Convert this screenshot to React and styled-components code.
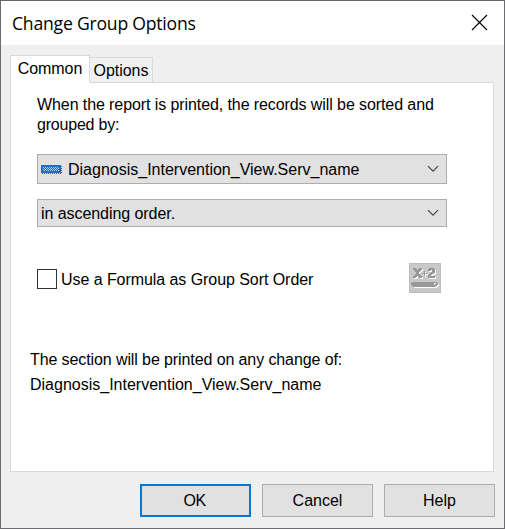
import React from "react";
import styled, { createGlobalStyle } from "styled-components";

const Global = createGlobalStyle`
  *, *::before, *::after { box-sizing: border-box; }
  body { margin: 0; overflow: hidden; }
`;

const Dialog = styled.main`
  width: 505px;
  height: 529px;
  display: flex;
  flex-direction: column;
  border: 1px solid #6d6d6f;
  border-top-color: #64646f;
  background: #efefef;
  color: #000;
  font: 16px/20px "Liberation Sans", Arial, sans-serif;
`;

const TitleBar = styled.header`
  height: 44px;
  flex: none;
  display: flex;
  align-items: center;
  justify-content: space-between;
  padding: 0 16px 0 11px;
  background: #fff;
`;

const Title = styled.h1`
  margin: 0;
  font: 400 17.6px/24px "Open Sans", "Noto Sans", sans-serif;
  letter-spacing: -0.22px;
  white-space: nowrap;
`;

const CloseButton = styled.button`
  width: 17px;
  height: 17px;
  margin-top: -1px;
  padding: 0;
  border: 0;
  background: none;
  svg { display: block; }
`;

const Tabs = styled.nav`
  height: 38px;
  flex: none;
  display: flex;
  align-items: flex-end;
  padding-left: 9px;
  margin-bottom: -1px;
  z-index: 1;
`;

const Tab = styled.button`
  width: ${(p) => (p.$active ? 80 : 63)}px;
  height: ${(p) => (p.$active ? 28 : 26)}px;
  padding: ${(p) => (p.$active ? "0 0 1px" : "1px 0 0")};
  border: 1px solid #d9d9d9;
  border-left-width: ${(p) => (p.$active ? 1 : 0)}px;
  border-bottom-color: ${(p) => (p.$active ? "#fff" : "#d9d9d9")};
  background: ${(p) => (p.$active ? "#fff" : "#f0f0f0")};
  color: inherit;
  font: inherit;
  letter-spacing: -0.05px;
`;

const Panel = styled.section`
  width: 484px;
  height: 390px;
  flex: none;
  display: flex;
  flex-direction: column;
  margin-left: 9px;
  padding: 12px 0 0 26px;
  border: 1px solid #d9d9d9;
  background: #fff;
`;

const Line = styled.span`
  display: block;
  white-space: nowrap;
  letter-spacing: ${(p) => p.$spacing || 0}px;
`;

const Intro = styled.div`
  height: 59px;
`;

const Select = styled.div`
  width: 410px;
  height: ${(p) => p.$height}px;
  flex: none;
  display: flex;
  align-items: center;
  justify-content: space-between;
  margin-bottom: 15px;
  padding: 0 7px 0 3px;
  border: 1px solid #adadad;
  background: #e1e1e1;
`;

const Value = styled.div`
  display: flex;
  align-items: center;
  gap: 6px;
  ${Line} { padding-top: 2px; }
`;

const FormulaRow = styled.div`
  width: 404px;
  height: 30px;
  display: flex;
  align-items: center;
  justify-content: space-between;
  margin-top: 21px;
`;

const CheckLabel = styled.label`
  display: flex;
  align-items: center;
  gap: 4px;
  margin-top: 2px;
  ${Line} { padding-top: 2px; }
`;

const CheckBox = styled.input`
  appearance: none;
  width: 20px;
  height: 20px;
  margin: 0;
  border: 1px solid #333;
  background: #fff;
`;

const Summary = styled.div`
  margin: 54px 0 0 -7px;
  line-height: 25px;
`;

const Footer = styled.footer`
  display: flex;
  justify-content: flex-end;
  gap: 11px;
  padding: 12px 9px 0 0;
`;

const Button = styled.button`
  width: 111px;
  height: 33px;
  padding: ${(p) => (p.$primary ? "0 2px 0 0" : "0")};
  border: ${(p) => (p.$primary ? "2px solid #0078d7" : "1px solid #adadad")};
  background: #e1e1e1;
  color: inherit;
  font: inherit;
  letter-spacing: ${(p) => (p.$primary ? -0.5 : 0)}px;
`;

const Chevron = () => (
  <svg width="12" height="8" viewBox="0 0 12 8" fill="none">
    <path d="M1 1.2 6 6.2 11 1.2" stroke="#444" strokeWidth="1.2" />
  </svg>
);

const FieldIcon = () => (
  <svg width="21" height="9" viewBox="0 0 21 9" shapeRendering="crispEdges">
    <defs>
      <pattern id="dither" width="2" height="2" patternUnits="userSpaceOnUse">
        <path d="M0 0h1v1H0zM1 1h1v1H1z" fill="#a9cdf2" />
      </pattern>
    </defs>
    <path d="M0 0h20v8H0z" fill="#1e6fc8" />
    <path d="M2 2h16v4H2z" fill="url(#dither)" />
    <path d="M20 1h1v1h-1zM20 3h1v1h-1zM20 5h1v1h-1zM20 7h1v1h-1zM1 8h1v1H1zM3 8h1v1H3zM5 8h1v1H5zM7 8h1v1H7zM9 8h1v1H9zM11 8h1v1h-1zM13 8h1v1h-1zM15 8h1v1h-1zM17 8h1v1h-1zM19 8h1v1h-1z" fill="#1e6fc8" />
  </svg>
);

const FormulaShapes = () => (
  <>
    <path d="M4 5h3v1h1v1h1V6h1V5h3v2h-1v1h-1v1h-1v2h1v1h1v1h1v2h-3v-1H9v-1H8v1H7v1H4v-2h1v-1h1v-1h1V9H6V8H5V7H4z" />
    <path d="M15 8h1v2h2v1h-2v2h-1v-2h-2v-1h2z" />
    <path d="M20 5h5v1h1v4h-1v1h-2v1h-1v1h4v2h-7v-3h1v-1h1v-1h1V9h1V7h-1v1h-3V6h1z" />
    <path d="M3 19h25v1h1v2h-1v1h-1v1H4v-1H3v-1H2v-2h1z" />
  </>
);

const FormulaIcon = () => (
  <svg width="32" height="30" viewBox="0 0 32 30" shapeRendering="crispEdges">
    <path d="M0 0h32v30H0z" fill="#bdbdbd" />
    <path d="M1 1h30v28H1z" fill="#c8c8c8" />
    <g fill="#fff" transform="translate(1 1)"><FormulaShapes /></g>
    <g fill="#989898"><FormulaShapes /></g>
    <path d="M25 20h2v1h-1v1h-1z" fill="#eee" />
  </svg>
);

export default function App() {
  return (
    <>
      <Global />
      <Dialog>
        <TitleBar>
          <Title>Change Group Options</Title>
          <CloseButton aria-label="Close">
            <svg width="17" height="17" viewBox="0 0 17 17">
              <path d="M1 1 16 16M16 1 1 16" stroke="#000" strokeWidth="1.15" />
            </svg>
          </CloseButton>
        </TitleBar>
        <Tabs>
          <Tab $active>Common</Tab>
          <Tab>Options</Tab>
        </Tabs>
        <Panel>
          <Intro>
            <Line $spacing={-0.09}>When the report is printed, the records will be sorted and</Line>
            <Line $spacing={-0.2}>grouped by:</Line>
          </Intro>
          <Select $height={30}>
            <Value>
              <FieldIcon />
              <Line>Diagnosis_Intervention_View.Serv_name</Line>
            </Value>
            <Chevron />
          </Select>
          <Select $height={28}>
            <Value>
              <Line $spacing={-0.06}>in ascending order.</Line>
            </Value>
            <Chevron />
          </Select>
          <FormulaRow>
            <CheckLabel>
              <CheckBox type="checkbox" />
              <Line $spacing={-0.06}>Use a Formula as Group Sort Order</Line>
            </CheckLabel>
            <FormulaIcon />
          </FormulaRow>
          <Summary>
            <Line $spacing={-0.1}>The section will be printed on any change of:</Line>
            <Line>Diagnosis_Intervention_View.Serv_name</Line>
          </Summary>
        </Panel>
        <Footer>
          <Button $primary>OK</Button>
          <Button>Cancel</Button>
          <Button>Help</Button>
        </Footer>
      </Dialog>
    </>
  );
}
